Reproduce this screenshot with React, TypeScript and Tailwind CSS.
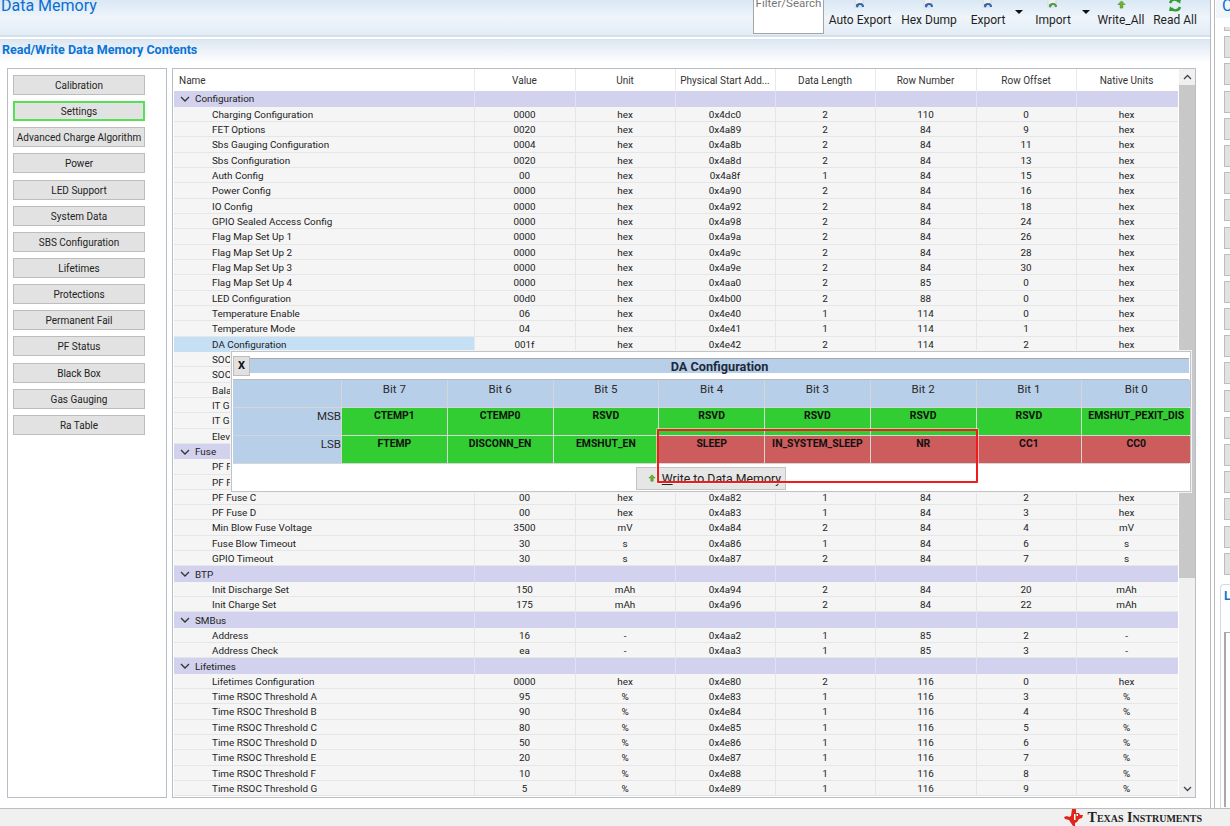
const font = "font-['Roboto',Arial,sans-serif]";

type Row = string[];
interface Group {
  name: string;
  rows: Row[];
}

const columns = ["Value", "Unit", "Physical Start Add...", "Data Length", "Row Number", "Row Offset", "Native Units"];

const thresholds: Row[] = [
  ["Time RSOC Threshold A", "95", "%", "0x4e83", "1", "116", "3", "%"],
  ["Time RSOC Threshold B", "90", "%", "0x4e84", "1", "116", "4", "%"],
  ["Time RSOC Threshold C", "80", "%", "0x4e85", "1", "116", "5", "%"],
  ["Time RSOC Threshold D", "50", "%", "0x4e86", "1", "116", "6", "%"],
  ["Time RSOC Threshold E", "20", "%", "0x4e87", "1", "116", "7", "%"],
  ["Time RSOC Threshold F", "10", "%", "0x4e88", "1", "116", "8", "%"],
  ["Time RSOC Threshold G", "5", "%", "0x4e89", "1", "116", "9", "%"],
];

const groups: Group[] = [
  {
    name: "Configuration",
    rows: [
      ["Charging Configuration", "0000", "hex", "0x4dc0", "2", "110", "0", "hex"],
      ["FET Options", "0020", "hex", "0x4a89", "2", "84", "9", "hex"],
      ["Sbs Gauging Configuration", "0004", "hex", "0x4a8b", "2", "84", "11", "hex"],
      ["Sbs Configuration", "0020", "hex", "0x4a8d", "2", "84", "13", "hex"],
      ["Auth Config", "00", "hex", "0x4a8f", "1", "84", "15", "hex"],
      ["Power Config", "0000", "hex", "0x4a90", "2", "84", "16", "hex"],
      ["IO Config", "0000", "hex", "0x4a92", "2", "84", "18", "hex"],
      ["GPIO Sealed Access Config", "0000", "hex", "0x4a98", "2", "84", "24", "hex"],
      ["Flag Map Set Up 1", "0000", "hex", "0x4a9a", "2", "84", "26", "hex"],
      ["Flag Map Set Up 2", "0000", "hex", "0x4a9c", "2", "84", "28", "hex"],
      ["Flag Map Set Up 3", "0000", "hex", "0x4a9e", "2", "84", "30", "hex"],
      ["Flag Map Set Up 4", "0000", "hex", "0x4aa0", "2", "85", "0", "hex"],
      ["LED Configuration", "00d0", "hex", "0x4b00", "2", "88", "0", "hex"],
      ["Temperature Enable", "06", "hex", "0x4e40", "1", "114", "0", "hex"],
      ["Temperature Mode", "04", "hex", "0x4e41", "1", "114", "1", "hex"],
      ["DA Configuration", "001f", "hex", "0x4e42", "2", "114", "2", "hex"],
      ["SOC"],
      ["SOC"],
      ["Bala"],
      ["IT Ga"],
      ["IT Ga"],
      ["Elev"],
    ],
  },
  {
    name: "Fuse",
    rows: [
      ["PF F"],
      ["PF F"],
      ["PF Fuse C", "00", "hex", "0x4a82", "1", "84", "2", "hex"],
      ["PF Fuse D", "00", "hex", "0x4a83", "1", "84", "3", "hex"],
      ["Min Blow Fuse Voltage", "3500", "mV", "0x4a84", "2", "84", "4", "mV"],
      ["Fuse Blow Timeout", "30", "s", "0x4a86", "1", "84", "6", "s"],
      ["GPIO Timeout", "30", "s", "0x4a87", "2", "84", "7", "s"],
    ],
  },
  {
    name: "BTP",
    rows: [
      ["Init Discharge Set", "150", "mAh", "0x4a94", "2", "84", "20", "mAh"],
      ["Init Charge Set", "175", "mAh", "0x4a96", "2", "84", "22", "mAh"],
    ],
  },
  {
    name: "SMBus",
    rows: [
      ["Address", "16", "-", "0x4aa2", "1", "85", "2", "-"],
      ["Address Check", "ea", "-", "0x4aa3", "1", "85", "3", "-"],
    ],
  },
  {
    name: "Lifetimes",
    rows: [["Lifetimes Configuration", "0000", "hex", "0x4e80", "2", "116", "0", "hex"], ...thresholds],
  },
];

const sideButtons = [
  "Calibration",
  "Settings",
  "Advanced Charge Algorithm",
  "Power",
  "LED Support",
  "System Data",
  "SBS Configuration",
  "Lifetimes",
  "Protections",
  "Permanent Fail",
  "PF Status",
  "Black Box",
  "Gas Gauging",
  "Ra Table",
];

const bits = ["Bit 7", "Bit 6", "Bit 5", "Bit 4", "Bit 3", "Bit 2", "Bit 1", "Bit 0"];
const msb = ["CTEMP1", "CTEMP0", "RSVD", "RSVD", "RSVD", "RSVD", "RSVD", "EMSHUT_PEXIT_DIS"];
const lsb = ["FTEMP", "DISCONN_EN", "EMSHUT_EN", "SLEEP", "IN_SYSTEM_SLEEP", "NR", "CC1", "CC0"];
const lsbSet = [true, true, true, false, false, false, false, false];

const gridCols = "grid grid-cols-[300px_101px_100px_100px_100px_101px_100px_101px]";

const DocIcon = ({ color }: { color: string }) => (
  <svg width="14" height="12" viewBox="0 0 14 12" className="block">
    <path d="M2 0h8v10H2z" fill="#eeeeee" stroke="#d8d8d8" strokeWidth="1" />
    <path d="M4 10a3 3 0 0 1 6 0" fill="none" stroke={color} strokeWidth="2" />
    <path d="M3 7l3 1-2 3z" fill={color} />
  </svg>
);

const UpArrow = ({ size = 9 }: { size?: number }) => (
  <svg width={size} height={size} viewBox="0 0 10 10" className="block">
    <path d="M5 1l4 4H6.500v4h-3V5H1z" fill="#6fb52c" stroke="#3f8a18" strokeWidth="0.6" />
  </svg>
);

const Refresh = () => (
  <svg width="14" height="14" viewBox="0 0 14 14" className="block -mb-[3px]">
    <path d="M2 5a5 5 0 0 1 9-1" fill="none" stroke="#2f9e2f" strokeWidth="2.400" />
    <path d="M9 1l4 0-1 5z" fill="#2f9e2f" />
    <path d="M12 9a5 5 0 0 1-9 1" fill="none" stroke="#2f9e2f" strokeWidth="2.400" />
    <path d="M5 13l-4 0 1-5z" fill="#2f9e2f" />
  </svg>
);

const Caret = () => <div className="w-0 h-0 border-x-[4px] border-x-transparent border-t-[4px] border-t-[#111]" />;

const ToolButton = ({ label, icon, className }: { label: string; icon: React.ReactNode; className: string }) => (
  <div className={`flex flex-col items-center shrink-0 ${className}`}>
    <div className="h-[11px] flex items-end justify-center">{icon}</div>
    <div className="text-[12px] leading-[13px] mt-[5px] text-[#1f1f1f] whitespace-nowrap">{label}</div>
  </div>
);

const Toolbar = () => (
  <div className="flex items-start -mt-[2px]">
    <div className="w-[71px] h-[36px] bg-white border border-[#a5a5a5] border-t-0 shrink-0 overflow-hidden">
      <div className="text-[11.500px] leading-[10px] text-[#777] text-center">Filter/Search</div>
    </div>
    <ToolButton className="w-[62px] ml-[5px]" label="Auto Export" icon={<DocIcon color="#2c68b4" />} />
    <ToolButton className="w-[56px] ml-[10px]" label="Hex Dump" icon={<DocIcon color="#2c68b4" />} />
    <ToolButton className="w-[36px] ml-[13px]" label="Export" icon={<DocIcon color="#2c68b4" />} />
    <div className="mt-[12px] ml-[9px] w-[8px]">
      <Caret />
    </div>
    <ToolButton className="w-[36px] ml-[12px]" label="Import" icon={<DocIcon color="#4c9a4c" />} />
    <div className="mt-[12px] ml-[11px] w-[8px]">
      <Caret />
    </div>
    <ToolButton className="w-[46px] ml-[8px]" label="Write_All" icon={<UpArrow />} />
    <ToolButton className="w-[44px] ml-[9px]" label="Read All" icon={<Refresh />} />
  </div>
);

const TiLogo = () => (
  <svg width="19" height="17" viewBox="0 0 19 17" className="block">
    <path
      d="M8 0h4v4h3l1 2h3l-1 3-3 1-2 3-2 1v3h-2l-2-3-2-3-4-1-1-2 3-1 2 1 2-1z"
      fill="#e2231a"
    />
    <path d="M10 5h1.500v6H10zM12.500 5H14v2h-1.500z" fill="#ffffff" />
  </svg>
);

const DataRow = ({ row, selected }: { row: Row; selected: boolean }) => (
  <div className={`${gridCols} h-[15.33px] leading-[15px] text-[9.900px] text-[#222] bg-[#f5f5f5] shadow-[inset_0_-1px_0_#e6e6e6]`}>
    <div className={`pl-[38px] whitespace-nowrap overflow-hidden ${selected ? "bg-[#c5dff5]" : ""}`}>{row[0]}</div>
    {columns.map((c, i) => (
      <div key={c} className="text-center shadow-[inset_1px_0_0_#e6e6e6]">
        {row[i + 1] ?? ""}
      </div>
    ))}
  </div>
);

const GroupRow = ({ name }: { name: string }) => (
  <div className={`${gridCols} h-[15.33px] leading-[15px] text-[9.900px] text-[#222] bg-[#d2d2ee]`}>
    <div className="flex items-center pl-[6px] gap-[5px]">
      <svg width="10" height="6" viewBox="0 0 10 6" className="block">
        <path d="M1 1l4 4 4-4" fill="none" stroke="#333" strokeWidth="1.300" />
      </svg>
      {name}
    </div>
    {columns.map((c) => (
      <div key={c} className="shadow-[inset_1px_0_0_#e0e0f2]" />
    ))}
  </div>
);

const DaPopup = () => (
  <div className="absolute left-[57px] top-[281px] w-[962px] h-[143px] bg-white border border-[#f2f2f2] shadow-[inset_0_0_0_1px_#c4c4c4] p-[2px]">
    <div className="flex items-center h-[21px] mt-[2px]">
      <div className="w-[17px] h-[20px] bg-[#e1e1e1] border border-[#bdbdbd] text-[11px] font-bold text-[#111] text-center leading-[18px] shrink-0">
        X
      </div>
      <div className="flex-1 h-[15px] bg-[#b8cfe9] border-t border-[#a9a9a9] text-[12.700px] leading-[15px] font-bold text-[#1c2a3a] text-center">
        DA Configuration
      </div>
    </div>
    <div className="grid grid-cols-[108px_repeat(7,104.750px)_108px] grid-rows-[26.500px_27px_27px] mt-[3px] bg-[#d6d6d6] gap-[1px] border-t border-[#bcbcbc] text-center">
      <div className="bg-[#b8cfe9]" />
      {bits.map((b) => (
        <div key={b} className="bg-[#b8cfe9] text-[#2a2a2a] text-[11.500px] leading-[18px]">
          {b}
        </div>
      ))}
      <div className="bg-[#b8cfe9] text-[#2a2a2a] text-right text-[11.500px] leading-[17px]">MSB</div>
      {msb.map((b, i) => (
        <div key={i} className="bg-[#32cd32] text-[#111] text-[10.400px] font-bold leading-[15px] whitespace-nowrap">
          {b}
        </div>
      ))}
      <div className="bg-[#b8cfe9] text-[#2a2a2a] text-right text-[11.500px] leading-[17px]">LSB</div>
      {lsb.map((b, i) => (
        <div
          key={i}
          className={`${lsbSet[i] ? "bg-[#32cd32]" : "bg-[#cd5c5c]"} text-[#111] text-[10.400px] font-bold leading-[15px] whitespace-nowrap`}
        >
          {b}
        </div>
      ))}
    </div>
    <div className="flex justify-center border-t border-[#d6d6d6] pt-[3px]">
      <div className="w-[150px] h-[23px] bg-[#e6e6e6] border border-[#c4c4c4] flex items-center justify-end pr-[4px] gap-[6px] text-[12.300px] text-[#222]">
        <UpArrow size={8} />
        <span className="pt-[3px]">
          <span className="underline">W</span>rite to Data Memory
        </span>
      </div>
    </div>
  </div>
);

const App = () => {
  return (
    <div className={`${font} relative w-[1230px] h-[826px] overflow-hidden bg-white flex flex-col`}>
      <div className="flex h-[808px]">
        <div className="w-[1211px] shrink-0 flex flex-col border-r border-[#b9b9b9]">
          <div className="h-[37px] flex justify-between pr-[13px] overflow-hidden border-b-[2px] border-[#d3dfeb] bg-gradient-to-b from-[#dae8f5] via-[#eef4fa] to-[#e3edf6]">
            <div className="text-[16px] leading-[18px] -mt-[3px] pl-[1px] text-[#0a6fd1]">Data Memory</div>
            <Toolbar />
          </div>
          <div className="h-[24px] mt-[2px] pl-[2px] pt-[3px] text-[12.500px] leading-[14px] font-bold text-[#0a74d6] border-t border-[#d8e3ee] bg-gradient-to-b from-[#dde7f2] to-white">
            Read/Write Data Memory Contents
          </div>
          <div className="flex gap-[5px] pl-[7px] pr-[14px] mt-[5px] h-[730px]">
            <div className="w-[160px] shrink-0 border border-[#b8bec6] pt-[6px] pl-[5px]">
              <div className="flex flex-col gap-[6.150px] w-[132px]">
                {sideButtons.map((b) => (
                  <div
                    key={b}
                    className={`h-[20px] text-center text-[10px] text-[#222] bg-[#e2e2e2] whitespace-nowrap ${
                      b === "Settings"
                        ? "border-2 border-[#55e055] leading-[17px]"
                        : "border border-[#bdbdbd] leading-[20px]"
                    }`}
                  >
                    {b}
                  </div>
                ))}
              </div>
            </div>
            <div className="relative flex-1 border border-[#b8bec6] pl-[1px] overflow-hidden flex">
              <div className="w-[1004px] shrink-0 overflow-hidden">
                <div className={`${gridCols} h-[22.300px] leading-[23px] text-[10px] text-[#333] bg-white`}>
                  <div className="pl-[5px]">Name</div>
                  {columns.map((c) => (
                    <div key={c} className="text-center shadow-[inset_1px_0_0_#e9e9e9] whitespace-nowrap">
                      {c}
                    </div>
                  ))}
                </div>
                {groups.map((g) => (
                  <div key={g.name}>
                    <GroupRow name={g.name} />
                    {g.rows.map((r, i) => (
                      <DataRow key={i} row={r} selected={r[0] === "DA Configuration"} />
                    ))}
                  </div>
                ))}
              </div>
              <div className="w-[17px] ml-[1px] shrink-0 flex flex-col bg-[#f0f0f0]">
                <div className="h-[16px] flex items-center justify-center">
                  <svg width="9" height="6" viewBox="0 0 9 6" className="block">
                    <path d="M1 5l3.500-3.500L8 5" fill="none" stroke="#444" strokeWidth="1.300" />
                  </svg>
                </div>
                <div className="h-[493px] bg-[#c8c8c8]" />
                <div className="flex-1" />
                <div className="h-[16px] flex items-center justify-center">
                  <svg width="9" height="6" viewBox="0 0 9 6" className="block">
                    <path d="M1 1l3.500 3.500L8 1" fill="none" stroke="#444" strokeWidth="1.300" />
                  </svg>
                </div>
              </div>
              <DaPopup />
            </div>
          </div>
        </div>

        <div className="flex-1 ml-[3px] border-l border-[#b9b9b9] pl-[1px] overflow-hidden flex flex-col">
          <div className="h-[21px] pl-[6px] text-[16px] leading-[18px] -mt-[3px] text-[#0a6fd1] bg-[#f1f6fb] shrink-0">C</div>
          <div className="ml-[8px] mt-[9px] flex flex-col gap-[5.200px] shrink-0">
            <div className="h-[4px] w-[20px] bg-[#e2e2e2] border border-t-0 border-[#bdbdbd]" />
            {Array.from({ length: 20 }).map((_, i) => (
              <div key={i} className="h-[22px] w-[20px] bg-[#e2e2e2] border border-[#bdbdbd]" />
            ))}
          </div>
          <div className="mt-[9px] ml-[4px] h-[225px] shrink-0 border-l border-t border-[#d0dbe6] rounded-tl-[4px] pt-[3px] pl-[3px]">
            <div className="text-[12px] leading-[16px] font-bold text-[#0a74d6]">L</div>
            <div className="mt-[28px] h-[175px] border-l-2 border-t border-[#a9a9a9]" />
          </div>
        </div>
      </div>

      <div className="flex-1 bg-[#f0f0f0] border-t border-[#bdbdbd] flex items-center justify-end pr-[28px] gap-[5px]">
        <TiLogo />
        <div className="font-['Liberation_Serif',serif] [font-variant:small-caps] text-[14px] leading-[16px] text-[#222] font-bold whitespace-nowrap">
          Texas Instruments
        </div>
      </div>

      {/* the red mark-up box drawn on top of the screenshot */}
      <div className="absolute left-[657px] top-[429px] w-[321px] h-[54px] border-[2px] border-[#ef1c1c] rounded-[1px] shadow-[0_0_0_1px_rgba(255,255,255,0.5)]" />
    </div>
  );
};

export default App;
